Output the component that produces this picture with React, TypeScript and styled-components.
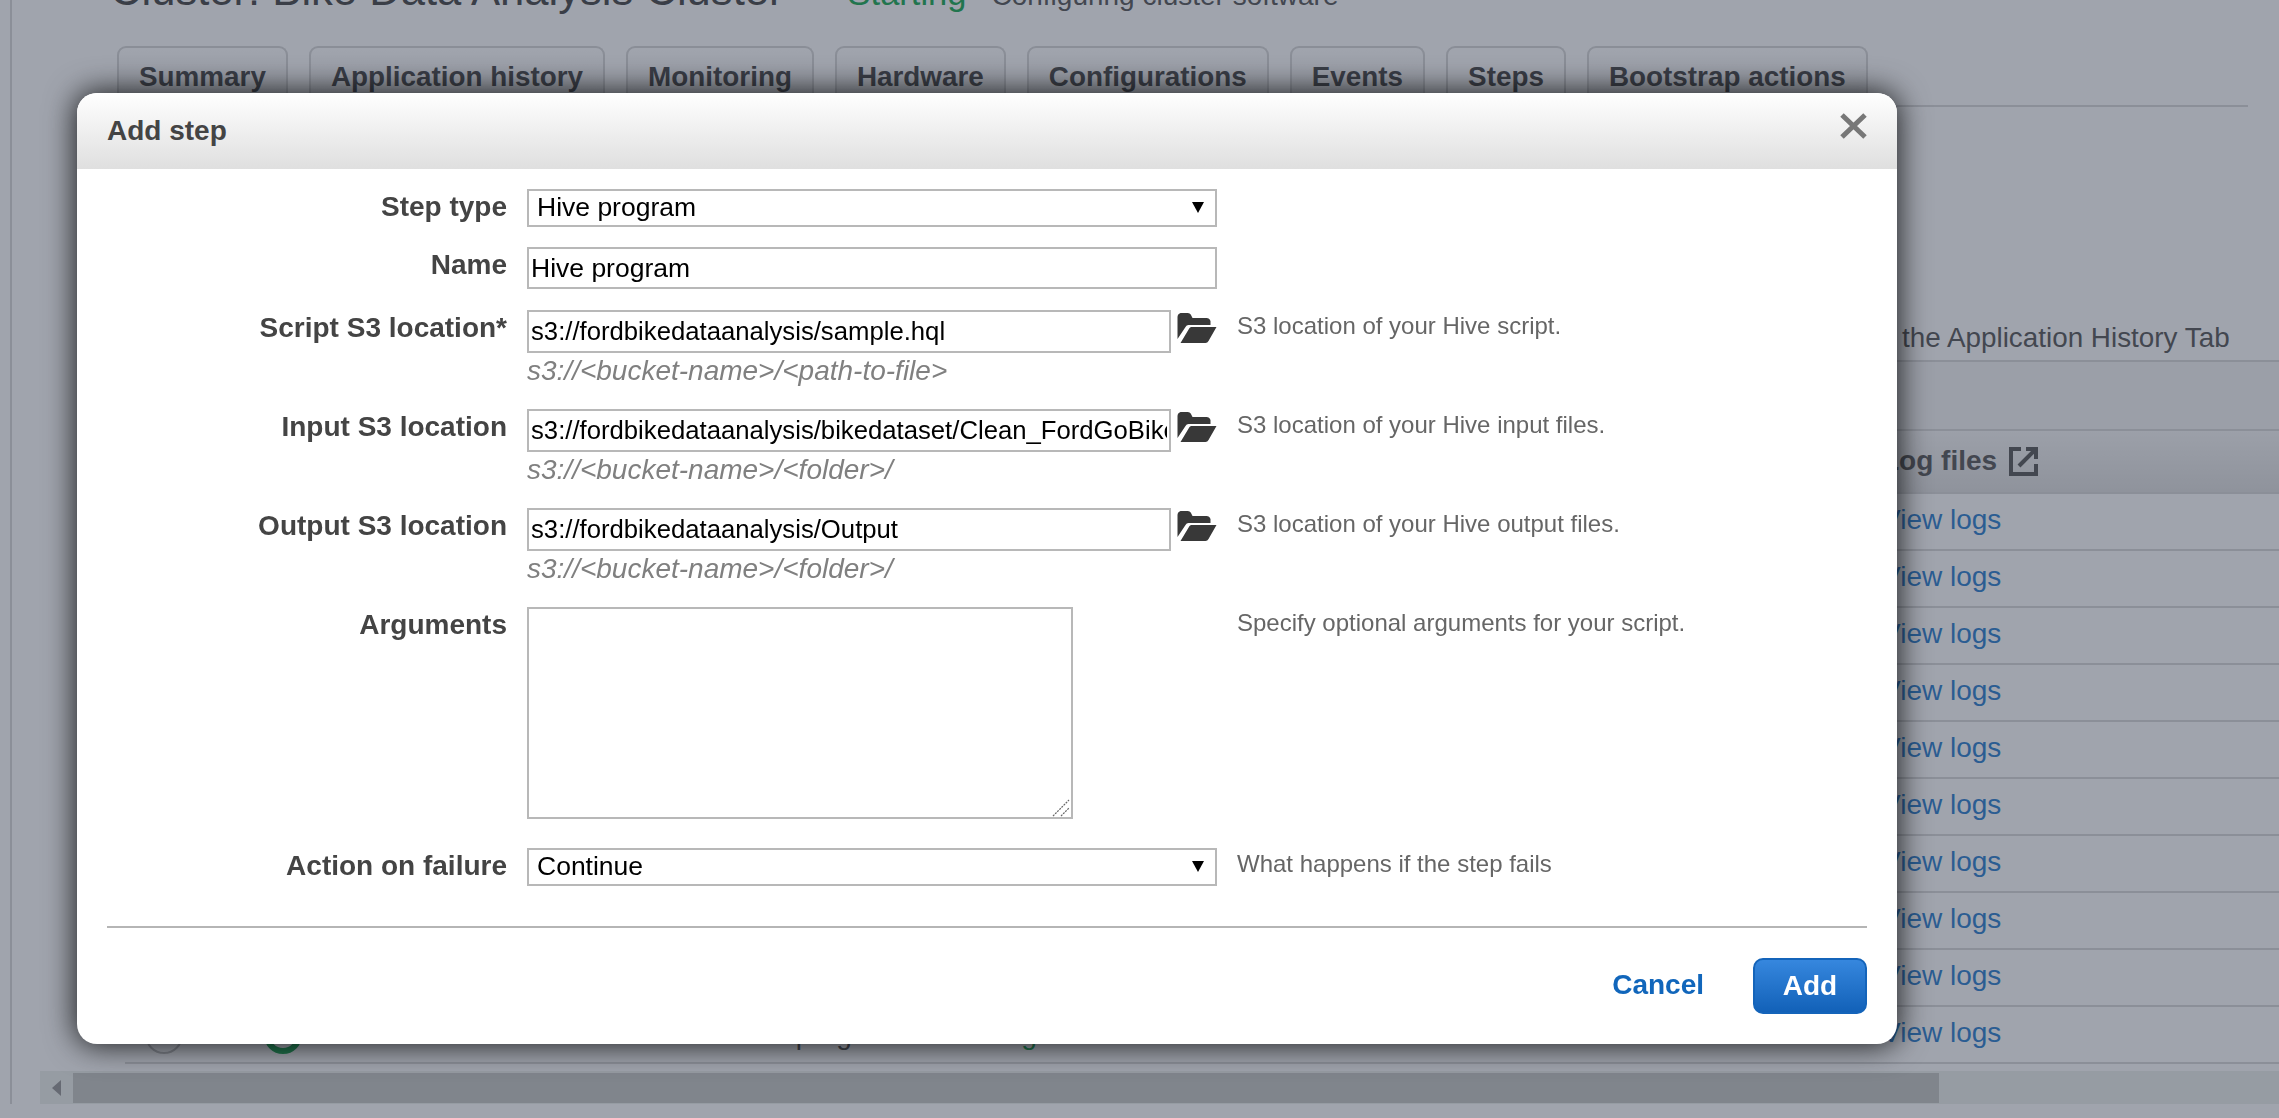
import styled, { createGlobalStyle } from "styled-components";

const TABS = [
  "Summary",
  "Application history",
  "Monitoring",
  "Hardware",
  "Configurations",
  "Events",
  "Steps",
  "Bootstrap actions",
];

const LOG_ROWS = 10;

function FolderIcon() {
  return (
    <FolderSvg viewBox="0 0 39 30">
      <path d="M0 4Q0 1 3 0H10Q13 0 14 3L15 5H29Q32 5 33 8V12H11Q9 12 8 14L0 26Z" />
      <path d="M3 30L12 15Q13 14 14 14H39L31 28Q30 30 28 30Z" />
    </FolderSvg>
  );
}

function ExternalIcon() {
  return (
    <ExternalSvg viewBox="0 0 29 29">
      <path d="M12 2H2V27H27V17" />
      <path d="M10 19L26 3" />
      <path d="M17 2H27V12" />
    </ExternalSvg>
  );
}

function App() {
  return (
    <>
      <GlobalStyle />
      <Shell>
        <Header>
          <ClusterTitle>Cluster: Bike Data Analysis Cluster</ClusterTitle>
          <ClusterState>Starting</ClusterState>
          <ClusterDetail>Configuring cluster software</ClusterDetail>
        </Header>
        <Tabs>
          {TABS.map((tab) => (
            <Tab key={tab} $active={tab === "Steps"}>
              {tab}
            </Tab>
          ))}
        </Tabs>
        <Table>
          <Note>the Application History Tab</Note>
          <Spacer />
          <HeadRow>
            <LogCell>
              <strong>Log files</strong>
              <ExternalIcon />
            </LogCell>
          </HeadRow>
          {Array.from({ length: LOG_ROWS }, (_, i) => (
            <Row key={i}>
              <StepCell>
                {i === LOG_ROWS - 1 && (
                  <>
                    <ExpandDot />
                    <StatusDot />
                    <StepName>Hive program</StepName>
                    <StepStatus>Pending</StepStatus>
                  </>
                )}
              </StepCell>
              <LogCell>
                <LogLink>View logs</LogLink>
              </LogCell>
            </Row>
          ))}
        </Table>
        <Scrollbar>
          <ScrollArrow />
          <ScrollThumb />
        </Scrollbar>
      </Shell>

      <Overlay />

      <Modal>
        <ModalHeader>
          <ModalTitle>Add step</ModalTitle>
          <CloseButton aria-label="Close">
            <svg width="27" height="26" viewBox="0 0 27 26">
              <path d="M2 2L25 24M25 2L2 24" stroke="#777" strokeWidth="5" />
            </svg>
          </CloseButton>
        </ModalHeader>
        <ModalBody>
          <Field $after={20}>
            <Label>Step type</Label>
            <Control>
              <SelectWrap>
                <Select defaultValue="Hive program">
                  <option>Hive program</option>
                </Select>
                <Caret />
              </SelectWrap>
            </Control>
          </Field>
          <Field $after={21}>
            <Label>Name</Label>
            <Control>
              <InputLine>
                <TextInput $height={42} defaultValue="Hive program" />
              </InputLine>
            </Control>
          </Field>
          <Field $after={20}>
            <Label>Script S3 location*</Label>
            <Control>
              <InputLine>
                <PathInput $height={43} defaultValue="s3://fordbikedataanalysis/sample.hql" />
                <FolderIcon />
              </InputLine>
              <Example>{"s3://<bucket-name>/<path-to-file>"}</Example>
            </Control>
            <Hint>S3 location of your Hive script.</Hint>
          </Field>
          <Field $after={20}>
            <Label>Input S3 location</Label>
            <Control>
              <InputLine>
                <PathInput
                  $height={43}
                  defaultValue="s3://fordbikedataanalysis/bikedataset/Clean_FordGoBike"
                />
                <FolderIcon />
              </InputLine>
              <Example>{"s3://<bucket-name>/<folder>/"}</Example>
            </Control>
            <Hint>S3 location of your Hive input files.</Hint>
          </Field>
          <Field $after={20}>
            <Label>Output S3 location</Label>
            <Control>
              <InputLine>
                <PathInput $height={43} defaultValue="s3://fordbikedataanalysis/Output" />
                <FolderIcon />
              </InputLine>
              <Example>{"s3://<bucket-name>/<folder>/"}</Example>
            </Control>
            <Hint>S3 location of your Hive output files.</Hint>
          </Field>
          <Field $after={29}>
            <Label>Arguments</Label>
            <Control>
              <TextareaWrap>
                <Textarea />
                <Grip viewBox="0 0 18 18">
                  <path d="M1 17L17 1M9 17L17 9" />
                </Grip>
              </TextareaWrap>
            </Control>
            <Hint>Specify optional arguments for your script.</Hint>
          </Field>
          <Field $after={0}>
            <Label>Action on failure</Label>
            <Control>
              <SelectWrap>
                <Select defaultValue="Continue">
                  <option>Continue</option>
                </Select>
                <Caret />
              </SelectWrap>
            </Control>
            <Hint>What happens if the step fails</Hint>
          </Field>
          <Footer>
            <CancelButton>Cancel</CancelButton>
            <AddButton>Add</AddButton>
          </Footer>
        </ModalBody>
      </Modal>
    </>
  );
}

export default App;

const GlobalStyle = createGlobalStyle`
  html, body {
    margin: 0;
    height: 100%;
    overflow: hidden;
    background: #fff;
    font-family: "Liberation Sans", Arial, sans-serif;
    color: #444;
  }
  * {
    box-sizing: border-box;
  }
`;

const Shell = styled.main`
  margin: -32px 0 0 10px;
  height: 1136px;
  border-left: 2px solid #d5d5d5;
  display: flex;
  flex-direction: column;
`;

const Header = styled.header`
  display: flex;
  align-items: baseline;
  height: 44px;
  margin-left: 98px;
  line-height: 44px;
  white-space: nowrap;
`;

const ClusterTitle = styled.h1`
  margin: 0;
  font-size: 43.6px;
  font-weight: 400;
  color: #333;
`;

const ClusterState = styled.span`
  margin-left: 64px;
  font-size: 34.5px;
  color: #00a040;
`;

const ClusterDetail = styled.span`
  margin-left: 25px;
  font-size: 28px;
  color: #444;
`;

const Tabs = styled.nav`
  display: flex;
  gap: 21px;
  height: 61px;
  margin: 34px 31px 0 105px;
  border-bottom: 2px solid #d5d5d5;
`;

const Tab = styled.div<{ $active?: boolean }>`
  height: 59px;
  padding: 13px 20px 0;
  border: 2px solid #d2d2d2;
  border-bottom: 0;
  border-radius: 9px 9px 0 0;
  background: ${(p) => (p.$active ? "#fff" : "linear-gradient(#fff, #e6e6e6)")};
  font-size: 27.85px;
  line-height: 32px;
  font-weight: 700;
  color: #333;
  white-space: nowrap;
`;

const Table = styled.section`
  margin-left: 113px;
  display: flex;
  flex-direction: column;
`;

const Note = styled.p`
  height: 255px;
  margin: 0;
  padding: 215px 0 0 1777px;
  border-bottom: 2px solid #d5d5d5;
  font-size: 27.85px;
  line-height: 32px;
  color: #444;
  white-space: nowrap;
`;

const Spacer = styled.div`
  height: 69px;
  border-bottom: 2px solid #d5d5d5;
  background: #f4f4f4;
`;

const HeadRow = styled.div`
  display: flex;
  align-items: center;
  justify-content: flex-end;
  height: 63px;
  padding-top: 2px;
  border-bottom: 2px solid #d5d5d5;
  background: linear-gradient(#f6f6f6, #dcdcdc);
`;

const Row = styled.div`
  display: flex;
  align-items: center;
  height: 57px;
  border-bottom: 2px solid #d5d5d5;
`;

const StepCell = styled.div`
  display: flex;
  align-items: center;
  width: 1757px;
  padding-left: 20px;
  font-size: 28px;
`;

const LogCell = styled.div`
  display: flex;
  align-items: center;
  gap: 12px;
  width: 397px;
  padding-bottom: 3px;
  font-size: 28px;
  color: #444;
  white-space: nowrap;
`;

const LogLink = styled.a`
  color: #1270c8;
`;

const ExpandDot = styled.span`
  width: 38px;
  height: 38px;
  border: 2px solid #bbb;
  border-radius: 50%;
`;

const StatusDot = styled.span`
  width: 38px;
  height: 38px;
  margin-left: 81px;
  border: 6px solid #00a040;
  border-radius: 50%;
`;

const StepName = styled.span`
  margin-left: 430px;
  color: #444;
`;

const StepStatus = styled.span`
  margin-left: 34px;
  color: #00a040;
`;

const Scrollbar = styled.div`
  display: flex;
  align-items: center;
  height: 34px;
  margin: 7px 0 0 28px;
  background: #ebefeb;
`;

const ScrollArrow = styled.span`
  width: 33px;
  padding-left: 12px;
  &::before {
    content: "";
    display: block;
    width: 0;
    height: 0;
    border: 8px solid transparent;
    border-left: 0;
    border-right: 9px solid #8a8a8a;
  }
`;

const ScrollThumb = styled.span`
  width: 1866px;
  height: 30px;
  background: #bfc1bd;
`;

const Overlay = styled.div`
  position: fixed;
  inset: 0;
  background: rgba(65, 73, 91, 0.5);
`;

const Modal = styled.div`
  position: fixed;
  left: 77px;
  top: 93px;
  width: 1820px;
  height: 951px;
  border-radius: 20px;
  background: #fff;
  box-shadow: 0 0 30px 2px rgba(0, 0, 0, 0.8);
  overflow: hidden;
`;

const ModalHeader = styled.div`
  display: flex;
  align-items: flex-start;
  justify-content: space-between;
  height: 76px;
  padding: 20px 30px 0;
  background: linear-gradient(#fff, #dfdfdf);
`;

const ModalTitle = styled.h2`
  margin: 0;
  padding-top: 2px;
  font-size: 28px;
  line-height: 32px;
  font-weight: 700;
  color: #444;
`;

const CloseButton = styled.button`
  padding: 0;
  border: 0;
  background: none;
  line-height: 0;
`;

const ModalBody = styled.div`
  display: flex;
  flex-direction: column;
  padding: 20px 30px 0;
`;

const Field = styled.div<{ $after: number }>`
  display: flex;
  align-items: flex-start;
  gap: 20px;
  margin-bottom: ${(p) => p.$after}px;
`;

const Label = styled.label`
  flex: none;
  width: 400px;
  padding-top: 2px;
  text-align: right;
  font-size: 28px;
  line-height: 32px;
  font-weight: 700;
  color: #444;
`;

const Control = styled.div`
  flex: none;
  width: 690px;
`;

const Hint = styled.div`
  font-size: 24px;
  line-height: 32px;
  color: #666;
`;

const SelectWrap = styled.div`
  position: relative;
`;

const Select = styled.select`
  display: block;
  width: 100%;
  height: 38px;
  padding: 0 30px 2px 8px;
  border: 2px solid #b8b8b8;
  border-radius: 0;
  background: #fff;
  appearance: none;
  font-family: inherit;
  font-size: 26.5px;
  color: #000;
`;

const Caret = styled.span`
  position: absolute;
  top: 13px;
  right: 13px;
  border-style: solid;
  border-width: 11px 6px 0;
  border-color: #000 transparent transparent;
`;

const InputLine = styled.div`
  display: flex;
  align-items: flex-start;
  gap: 6px;
`;

const TextInput = styled.input<{ $height: number }>`
  flex: 1;
  min-width: 0;
  height: ${(p) => p.$height}px;
  padding: 2px;
  border: 2px solid #b8b8b8;
  border-radius: 0;
  outline: 0;
  font-family: inherit;
  font-size: 26.5px;
  color: #000;
`;

const PathInput = styled(TextInput)`
  font-size: 25.7px;
`;

const FolderSvg = styled.svg`
  flex: none;
  width: 40px;
  height: 30px;
  margin-top: 3px;
  fill: #383838;
`;

const Example = styled.div`
  height: 36px;
  font-size: 28px;
  line-height: 36px;
  font-style: italic;
  color: #808080;
  white-space: nowrap;
`;

const TextareaWrap = styled.div`
  position: relative;
  width: 546px;
  height: 212px;
`;

const Textarea = styled.textarea`
  display: block;
  width: 100%;
  height: 100%;
  border: 2px solid #b8b8b8;
  border-radius: 0;
  outline: 0;
  resize: none;
`;

const Grip = styled.svg`
  position: absolute;
  right: 3px;
  bottom: 2px;
  width: 18px;
  height: 18px;
  fill: none;
  stroke: #666;
  stroke-width: 1.2;
  stroke-dasharray: 2 1;
`;

const Footer = styled.footer`
  display: flex;
  align-items: center;
  justify-content: flex-end;
  gap: 49px;
  margin-top: 40px;
  padding-top: 30px;
  border-top: 2px solid #b5b5b5;
`;

const CancelButton = styled.button`
  padding: 0 0 2px;
  border: 0;
  background: none;
  font-family: inherit;
  font-size: 28px;
  font-weight: 700;
  color: #1166bb;
`;

const AddButton = styled.button`
  width: 114px;
  height: 56px;
  padding: 0;
  border: 2px solid #1464ba;
  border-radius: 10px;
  background: linear-gradient(#3687de, #1261b8);
  font-family: inherit;
  font-size: 28px;
  font-weight: 700;
  color: #fff;
`;

const ExternalSvg = styled.svg`
  flex: none;
  width: 29px;
  height: 29px;
  fill: none;
  stroke: #444;
  stroke-width: 4;
`;
